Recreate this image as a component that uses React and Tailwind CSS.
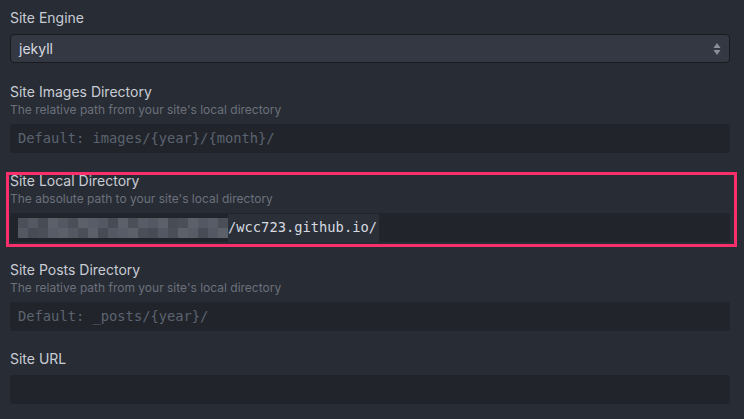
import React from 'react';

const uiFont = { fontFamily: 'Inter, "Noto Sans", sans-serif' };
const monoFont = { fontFamily: '"DejaVu Sans Mono", "Liberation Mono", monospace' };

// пикселизированный кусок пути (замазанная часть)
const pixelShades = [
  'bg-[#4a4f58]',
  'bg-[#535862]',
  'bg-[#5b6069]',
  'bg-[#474c55]',
  'bg-[#575c66]',
];
const pixelPattern = [
  [0, 1, 3, 2, 1, 0, 2, 4, 1, 3, 2, 0, 4, 1, 2, 3, 0, 2, 1, 4, 0],
  [1, 3, 0, 4, 2, 1, 0, 2, 3, 1, 4, 2, 0, 3, 1, 0, 2, 4, 3, 1, 2],
];

const FieldLabel = ({ title, desc }) => (
  <div>
    <div className="text-[14px] leading-[20px] text-[#c8ccd4]" style={uiFont}>
      {title}
    </div>
    {desc && (
      <div className="text-[12px] leading-[16px] text-[#6b717c]" style={uiFont}>
        {desc}
      </div>
    )}
  </div>
);

const TextInput = ({ placeholder, children }) => (
  <div
    className="mt-[6px] h-[29px] w-full rounded-[3px] bg-[#21252b] flex items-center pl-[8px] text-[13.75px]"
    style={monoFont}
  >
    {children ? children : <span className="text-[#5c6370]">{placeholder}</span>}
  </div>
);

export default function App() {
  return (
    <div className="w-full h-[419px] bg-[#282c34] pl-[10px] pr-[14px] pt-[8px] overflow-hidden">
      {/* Site Engine */}
      <FieldLabel title="Site Engine" />
      <div className="mt-[6px] h-[29px] w-full rounded-[4px] bg-[#333842] border border-[#181a1f] flex items-center justify-between pl-[8px] pr-[8px]">
        <span className="text-[14px] text-[#d7dae0]" style={uiFont}>jekyll</span>
        <svg width="8" height="14" viewBox="0 0 8 14">
          <polygon points="4,1 7.5,6 0.5,6" fill="#8b909b" />
          <polygon points="0.5,8 7.5,8 4,13" fill="#8b909b" />
        </svg>
      </div>

      {/* Site Images Directory */}
      <div className="mt-[19px]">
        <FieldLabel
          title="Site Images Directory"
          desc="The relative path from your site's local directory"
        />
        <TextInput placeholder="Default: images/{year}/{month}/" />
      </div>

      {/* Site Local Directory — выделено рамкой */}
      <div className="relative mt-[18px]">
        <div className="absolute -left-[4px] top-[1px] -right-[7px] -bottom-[5px] border-[3px] border-[#f92f6b] pointer-events-none" />
        <FieldLabel
          title="Site Local Directory"
          desc="The absolute path to your site's local directory"
        />
        <TextInput>
          <div className="flex flex-col">
            {pixelPattern.map((row, r) => (
              <div key={r} className="flex">
                {row.map((s, c) => (
                  <div key={c} className={`w-[10px] h-[10px] ${pixelShades[s]}`} />
                ))}
              </div>
            ))}
          </div>
          <span className="h-[28px] flex items-center bg-[#2b3038] pr-[2px] text-[#d7dae0]">
            /wcc723.github.io/
          </span>
        </TextInput>
      </div>

      {/* Site Posts Directory */}
      <div className="mt-[18px]">
        <FieldLabel
          title="Site Posts Directory"
          desc="The relative path from your site's local directory"
        />
        <TextInput placeholder="Default: _posts/{year}/" />
      </div>

      {/* Site URL */}
      <div className="mt-[18px]">
        <FieldLabel title="Site URL" />
        <TextInput placeholder="" />
      </div>
    </div>
  );
}
